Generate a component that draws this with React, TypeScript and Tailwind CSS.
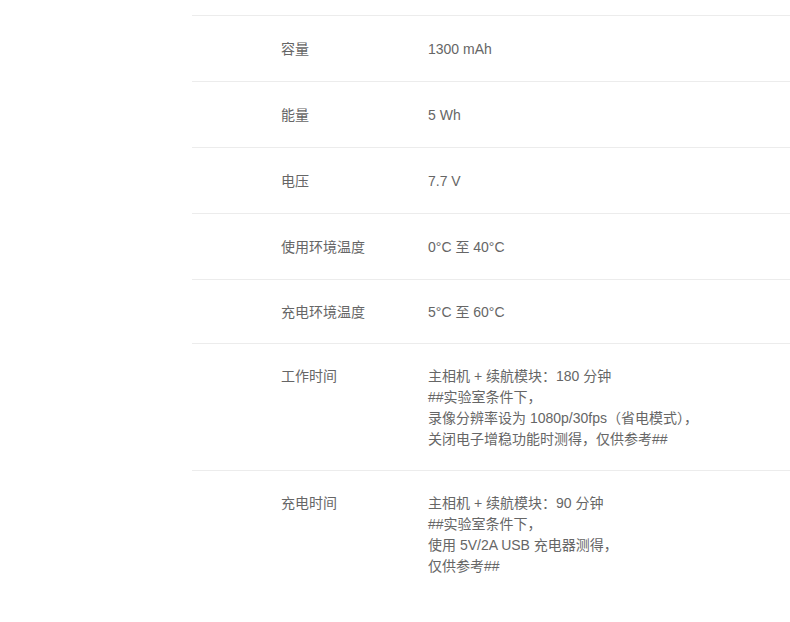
import React from "react";

const rows: { label: string; lines: string[]; cls?: string }[] = [
  { label: "容量", lines: ["1300 mAh"] },
  { label: "能量", lines: ["5 Wh"] },
  { label: "电压", lines: ["7.7 V"] },
  { label: "使用环境温度", lines: ["0°C 至 40°C"] },
  { label: "充电环境温度", lines: ["5°C 至 60°C"], cls: "pt-[22px] pb-[20px]" },
  {
    label: "工作时间",
    lines: [
      "主相机 + 续航模块：180 分钟",
      "##实验室条件下，",
      "录像分辨率设为 1080p/30fps（省电模式），",
      "关闭电子增稳功能时测得，仅供参考##",
    ],
    cls: "pt-[22px] pb-[20px]",
  },
  {
    label: "充电时间",
    lines: [
      "主相机 + 续航模块：90 分钟",
      "##实验室条件下，",
      "使用 5V/2A USB 充电器测得，",
      "仅供参考##",
    ],
    cls: "pt-[22px] pb-[20px] border-b-0",
  },
];

export default function App() {
  return (
    <div
      className="w-[790px] h-[622px] bg-white overflow-hidden pl-[192px] text-[14px] leading-[21px] text-[#666]"
      style={{ fontFamily: '"Liberation Sans", "Noto Sans CJK SC", sans-serif' }}
    >
      <div className="h-[16px] border-b border-[#ececec]" />
      {rows.map((r) => (
        <div
          key={r.label}
          className={`flex border-b border-[#ececec] ${r.cls ?? "pt-[23px] pb-[21px]"}`}
        >
          <div className="w-[236px] shrink-0 pl-[89px]">{r.label}</div>
          <div className="flex flex-col">
            {r.lines.map((l, i) => (
              <div key={i}>{l}</div>
            ))}
          </div>
        </div>
      ))}
    </div>
  );
}
